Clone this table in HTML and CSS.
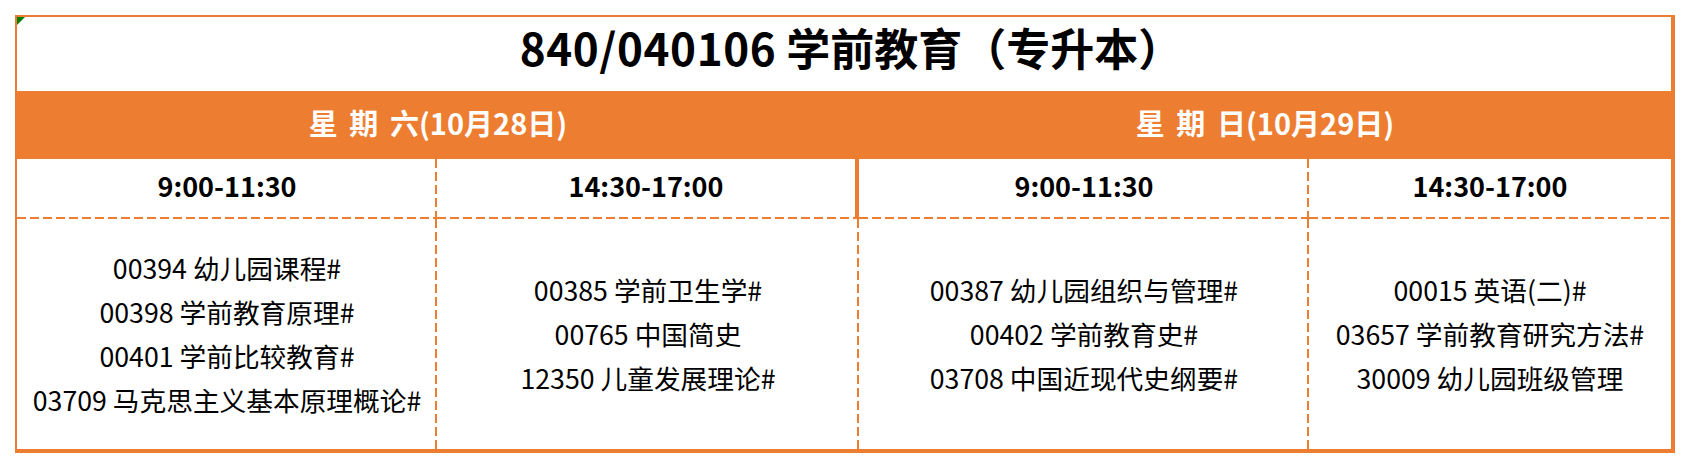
FILE: index.html
```html
<!DOCTYPE html>
<html lang="zh-CN">
<head>
<meta charset="utf-8">
<title>840/040106 学前教育（专升本）</title>
<link rel="stylesheet" href="styles.css">
</head>
<body>
<div class="sheet">
  <div class="title">
    <span class="comment-mark"></span>
    <span class="title-text"><span class="title-num">840/040106</span> 学前教育（专升本）</span>
  </div>
  <div class="day day-sat">星 期 六(10月28日)</div>
  <div class="day day-sun">星 期 日(10月29日)</div>

  <div class="time c1 dash-r">9:00-11:30</div>
  <div class="time c2 solid-r">14:30-17:00</div>
  <div class="time c3 dash-r">9:00-11:30</div>
  <div class="time c4">14:30-17:00</div>

  <div class="body c1 dash-r">
    <div class="line">00394 幼儿园课程#</div>
    <div class="line">00398 学前教育原理#</div>
    <div class="line">00401 学前比较教育#</div>
    <div class="line">03709 马克思主义基本原理概论#</div>
  </div>
  <div class="body c2 dash-r">
    <div class="line">00385 学前卫生学#</div>
    <div class="line">00765 中国简史</div>
    <div class="line">12350 儿童发展理论#</div>
  </div>
  <div class="body c3 dash-r">
    <div class="line">00387 幼儿园组织与管理#</div>
    <div class="line">00402 学前教育史#</div>
    <div class="line">03708 中国近现代史纲要#</div>
  </div>
  <div class="body c4">
    <div class="line">00015 英语(二)#</div>
    <div class="line">03657 学前教育研究方法#</div>
    <div class="line">30009 幼儿园班级管理</div>
  </div>
</div>
</body>
</html>
```

FILE: styles.css
```css
html, body {
  margin: 0;
  padding: 0;
  background: #ffffff;
}

body {
  font-family: "Noto Sans CJK SC", "Noto Sans", sans-serif;
  color: #000000;
}

.sheet {
  box-sizing: border-box;
  margin: 15px 0 0 15px;
  width: 1660px;
  height: 438px;
  border-style: solid;
  border-color: #ED7D31;
  border-width: 2px 4px 4px 2px;
  display: grid;
  grid-template-columns: 420px 422px 450px 362px;
  grid-template-rows: 74px 68px 60px 230px;
}

.title {
  grid-column: 1 / 5;
  position: relative;
  display: flex;
  align-items: center;
  justify-content: center;
  padding-bottom: 14px;
  box-sizing: border-box;
}

.title-text {
  font-size: 44px;
  font-weight: 700;
  line-height: 1;
  margin-left: 14px;
}

.title-num {
  letter-spacing: 0.6px;
}

.comment-mark {
  position: absolute;
  left: 0;
  top: 0;
  width: 0;
  height: 0;
  border-top: 8px solid #008000;
  border-right: 8px solid transparent;
}

.day {
  background: #ED7D31;
  color: #ffffff;
  font-size: 29px;
  font-weight: 700;
  word-spacing: 5px;
  display: flex;
  align-items: center;
  justify-content: center;
  padding-bottom: 7px;
  box-sizing: border-box;
  white-space: pre;
}

.day-sat { grid-column: 1 / 3; }
.day-sun { grid-column: 3 / 5; }

.time {
  font-size: 27px;
  font-weight: 700;
  display: flex;
  align-items: center;
  justify-content: center;
  padding-bottom: 8px;
  box-sizing: border-box;
  background-image: repeating-linear-gradient(to right, #ED7D31 0 9px, transparent 9px 13px);
  background-size: 100% 2px;
  background-position: left bottom;
  background-repeat: no-repeat;
}

.time.dash-r {
  background-image:
    repeating-linear-gradient(to right, #ED7D31 0 9px, transparent 9px 13px),
    repeating-linear-gradient(to bottom, #ED7D31 0 9px, transparent 9px 13px);
  background-size: 100% 2px, 2px 100%;
  background-position: left bottom, right top;
  background-repeat: no-repeat, no-repeat;
}

.time.solid-r {
  border-right: 4px solid #ED7D31;
}

.body {
  display: flex;
  flex-direction: column;
  align-items: center;
  justify-content: center;
  font-size: 26.7px;
  padding-bottom: 1px;
  box-sizing: border-box;
}

.body.dash-r {
  background-image: repeating-linear-gradient(to bottom, #ED7D31 0 9px, transparent 9px 13px);
  background-size: 2px 100%;
  background-position: right top;
  background-repeat: no-repeat;
}

.line {
  line-height: 44px;
  white-space: nowrap;
}
```
